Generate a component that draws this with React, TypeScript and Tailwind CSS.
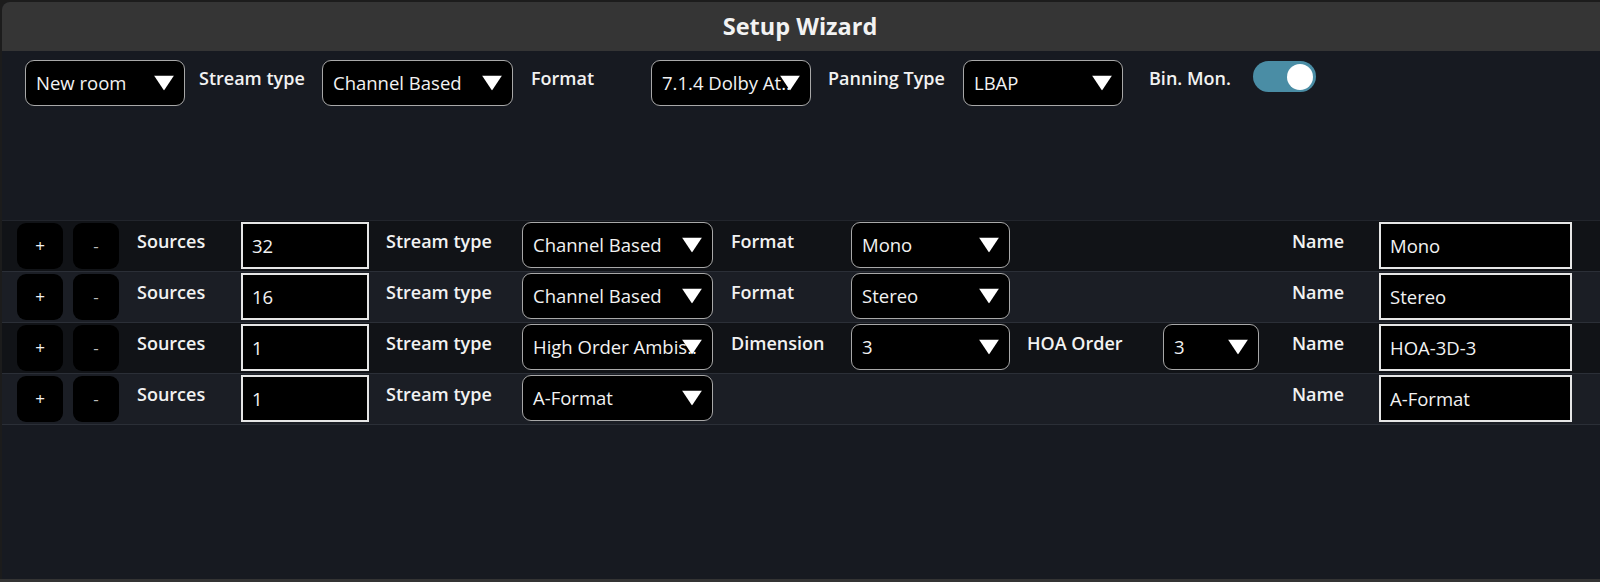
import { useState } from 'react';

const FONT = { fontFamily: '"Open Sans", "Noto Sans", sans-serif' };

function Caret() {
  return (
    <svg width="20" height="15" viewBox="0 0 20 15" className="absolute right-[10px] top-1/2 -translate-y-1/2">
      <polygon points="0,0 20,0 10,15" fill="#fff" />
    </svg>
  );
}

function Dropdown({ value, width }: { value: string; width: string }) {
  return (
    <div
      className={`${width} relative h-[46px] flex items-center pl-[10px] bg-black border border-[#a8a8a8] rounded-[9px] text-[18.5px] text-[#f2f2f2] flex-shrink-0`}
    >
      <span className="whitespace-nowrap">{value}</span>
      <Caret />
    </div>
  );
}

function TextBox({ value, width }: { value: string; width: string }) {
  return (
    <div
      className={`${width} h-[47px] flex items-center pl-[9px] bg-black border-2 border-[#e6e6e6] text-[18.5px] text-[#f2f2f2] flex-shrink-0`}
    >
      {value}
    </div>
  );
}

function Label({ text, width, pad }: { text: string; width: string; pad: string }) {
  return (
    <div className={`${width} ${pad} h-full pt-[6px] text-[18px] font-semibold text-[#f2f2f2] whitespace-nowrap flex-shrink-0`}>
      {text}
    </div>
  );
}

interface Row {
  count: string;
  stream: string;
  second?: { label: string; value: string };
  hoa?: string;
  name: string;
}

const rows: Row[] = [
  { count: '32', stream: 'Channel Based', second: { label: 'Format', value: 'Mono' }, name: 'Mono' },
  { count: '16', stream: 'Channel Based', second: { label: 'Format', value: 'Stereo' }, name: 'Stereo' },
  { count: '1', stream: 'High Order Ambis..', second: { label: 'Dimension', value: '3' }, hoa: '3', name: 'HOA-3D-3' },
  { count: '1', stream: 'A-Format', name: 'A-Format' },
];

function SourceRow({ row, index }: { row: Row; index: number }) {
  const bg = index % 2 === 0 ? 'bg-[#111317]' : 'bg-[#1b1e25]';
  return (
    <div className={`${bg} h-[51px] flex items-start pt-[1px] pl-[15px] border-b border-[#2b2f37]`}>
      <button className="w-[46px] h-[46px] mt-[1px] bg-black rounded-[9px] text-[17px] text-[#f2f2f2] flex items-center justify-center">
        +
      </button>
      <button className="w-[46px] h-[46px] mt-[1px] ml-[10px] bg-black rounded-[9px] text-[17px] text-[#bbb] flex items-center justify-center">
        -
      </button>
      <Label text="Sources" width="w-[122px]" pad="pl-[18px]" />
      <TextBox value={row.count} width="w-[128px]" />
      <Label text="Stream type" width="w-[153px]" pad="pl-[17px]" />
      <Dropdown value={row.stream} width="w-[191px]" />
      {row.second ? (
        <>
          <Label text={row.second.label} width="w-[138px]" pad="pl-[18px]" />
          <Dropdown value={row.second.value} width="w-[159px]" />
        </>
      ) : (
        <div className="w-[297px] flex-shrink-0" />
      )}
      {row.hoa ? (
        <>
          <Label text="HOA Order" width="w-[153px]" pad="pl-[17px]" />
          <Dropdown value={row.hoa} width="w-[96px]" />
        </>
      ) : (
        <div className="w-[249px] flex-shrink-0" />
      )}
      <Label text="Name" width="w-[120px]" pad="pl-[33px]" />
      <TextBox value={row.name} width="w-[193px]" />
    </div>
  );
}

export default function App() {
  const [binMon, setBinMon] = useState(true);
  return (
    <div className="w-[1600px] h-[582px] bg-[#1c1c1c] overflow-hidden" style={FONT}>
      <div className="ml-[2px] mt-[2px] h-[577px] rounded-tl-[8px] bg-[#171a21] flex flex-col overflow-hidden">
        {/* Title */}
        <div className="h-[49px] bg-[#353535] flex items-center justify-center flex-shrink-0">
          <h1 className="text-[23.5px] font-bold text-[#f2f2f2] -ml-[2px]">Setup Wizard</h1>
        </div>

        {/* Global settings */}
        <div className="h-[169px] flex items-start pt-[9px] pl-[23px] flex-shrink-0">
          <Dropdown value="New room" width="w-[160px]" />
          <Label text="Stream type" width="w-[137px]" pad="pl-[14px] !pt-[5px]" />
          <Dropdown value="Channel Based" width="w-[191px]" />
          <Label text="Format" width="w-[138px]" pad="pl-[18px] !pt-[5px]" />
          <Dropdown value="7.1.4 Dolby At.." width="w-[160px]" />
          <Label text="Panning Type" width="w-[152px]" pad="pl-[17px] !pt-[5px]" />
          <Dropdown value="LBAP" width="w-[160px]" />
          <Label text="Bin. Mon." width="w-[130px]" pad="pl-[26px] !pt-[5px]" />
          <button
            onClick={() => setBinMon(!binMon)}
            className={`w-[63px] h-[31px] mt-[1px] rounded-full flex items-center px-[3px] ${binMon ? 'bg-[#4a8da5] justify-end' : 'bg-[#555] justify-start'}`}
          >
            <span className="w-[26px] h-[26px] rounded-full bg-white" />
          </button>
        </div>

        {/* Sources */}
        <div className="border-t border-[#22252c]">
          {rows.map((row, i) => (
            <SourceRow key={i} row={row} index={i} />
          ))}
        </div>

        <div className="flex-1" />
      </div>
      <div className="h-[3px] bg-[#343434]" />
    </div>
  );
}
